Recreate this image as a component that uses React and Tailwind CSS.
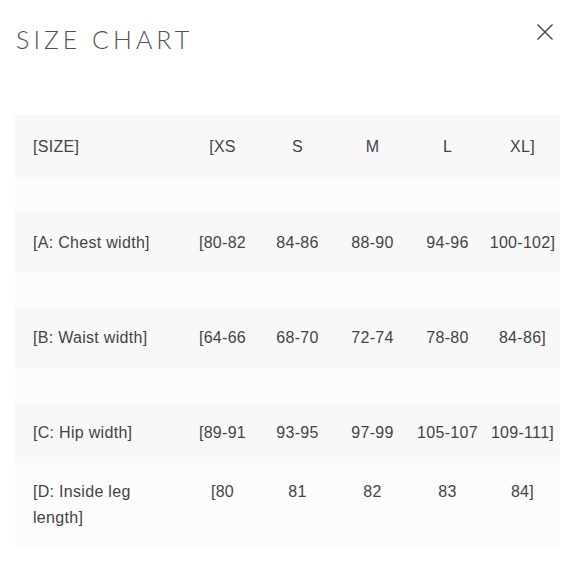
import React from "react";

const cols = ["[XS", "S", "M", "L", "XL]"];
const rows = [
  { label: "[A: Chest width]", vals: ["[80-82", "84-86", "88-90", "94-96", "100-102]"], h: "h-[61px]" },
  { label: "[B: Waist width]", vals: ["[64-66", "68-70", "72-74", "78-80", "84-86]"], h: "h-[62px]" },
  { label: "[C: Hip width]", vals: ["[89-91", "93-95", "97-99", "105-107", "109-111]"], h: "h-[60px]" },
];

function Row({ label, vals, cls }) {
  return (
    <div className={`flex items-center ${cls}`}>
      <div className="w-[170px] pl-[18px] shrink-0">{label}</div>
      {vals.map((v, i) => (
        <div key={i} className="w-[75px] text-center shrink-0 whitespace-nowrap">
          {v}
        </div>
      ))}
    </div>
  );
}

export default function App() {
  return (
    <div
      className="w-[584px] h-[562px] bg-white relative overflow-hidden"
      style={{ fontFamily: '"Liberation Sans", Arial, sans-serif' }}
    >
      <div className="flex items-start justify-between pl-[16px] pr-[30px] pt-[26px]">
        <h1
          className="text-[25px] leading-[26px] tracking-[0.16em] text-[#4f5357]"
          style={{ fontFamily: 'Lato, "Liberation Sans", sans-serif', fontWeight: 300 }}
        >
          SIZE CHART
        </h1>
        <svg width="18" height="18" viewBox="0 0 18 18" className="mt-[-3px]">
          <path d="M1.5 1.5 L16.5 16.5 M16.5 1.5 L1.5 16.5" stroke="#3a3a3a" strokeWidth="1.3" fill="none" />
        </svg>
      </div>
      <div className="ml-[15px] w-[545px] mt-[63px] text-[16px] tracking-[0.3px] text-[#444444]">
        <Row label="[SIZE]" vals={cols} cls="h-[63px] bg-[#f8f8f8]" />
        <div className="h-[34px] bg-[#fcfcfc]" />
        <Row {...rows[0]} cls={`${rows[0].h} bg-[#f8f8f8]`} />
        <div className="h-[34px] bg-[#fcfcfc]" />
        <Row {...rows[1]} cls={`${rows[1].h} bg-[#f8f8f8]`} />
        <div className="h-[34px] bg-[#fcfcfc]" />
        <Row {...rows[2]} cls={`${rows[2].h} bg-[#f8f8f8]`} />
        <div className="flex items-start h-[84px] bg-[#fcfcfc] pt-[16px] leading-[26px]">
          <div className="w-[170px] pl-[18px] shrink-0">
            [D: Inside leg
            <br />
            length]
          </div>
          {["[80", "81", "82", "83", "84]"].map((v, i) => (
            <div key={i} className="w-[75px] text-center shrink-0">
              {v}
            </div>
          ))}
        </div>
      </div>
    </div>
  );
}
